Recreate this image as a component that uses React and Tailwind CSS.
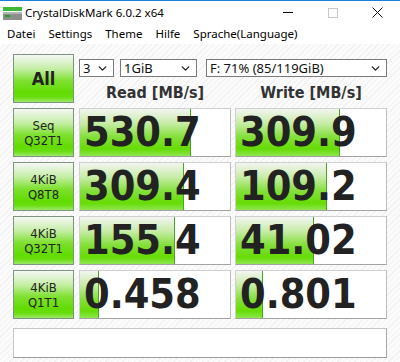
import { ChevronDown } from 'lucide-react'

const rows = [
  { l1: 'Seq', l2: 'Q32T1', read: '530.7', rw: 111, write: '309.9', ww: 104 },
  { l1: '4KiB', l2: 'Q8T8', read: '309.4', rw: 104, write: '109.2', ww: 91 },
  { l1: '4KiB', l2: 'Q32T1', read: '155.4', rw: 95, write: '41.02', ww: 78 },
  { l1: '4KiB', l2: 'Q1T1', read: '0.458', rw: 19, write: '0.801', ww: 27 }
]

const greenBtn =
  'bg-[linear-gradient(to_bottom,#f6f7f6_0%,#c4eea4_30%,#7ee030_55%,#62dc00_80%,#6ade10_90%,#9ce868_100%)] border border-[#7d957d]'

function Cell({ value, width }) {
  return (
    <div className="relative h-[49px] w-[152px] bg-white border border-[#cfcfcf] border-b-[#a3a3a3] border-r-[#bdbdbd] overflow-hidden">
      <div
        className="absolute left-0 top-0 bottom-0 border-r border-[#49a526] bg-[linear-gradient(to_bottom,#f3f5f2_0%,#c8eca8_30%,#84df3a_60%,#66dc04_85%,#8ee650_100%)]"
        style={{ width }}
      />
      <div className="relative h-full flex items-center pl-[4px] text-[41px] font-bold leading-none text-[#222] font-['DejaVu_Sans_Condensed','DejaVu_Sans',sans-serif]">
        {value}
      </div>
    </div>
  )
}

function Select({ w, children }) {
  return (
    <div
      className={`${w} h-[18px] bg-white border border-[#7a7a7a] flex items-center justify-between pl-[3px] pr-[4px] text-[13px] text-[#111] font-['Noto_Sans',sans-serif]`}
    >
      <span className="leading-none">{children}</span>
      <ChevronDown size={13} strokeWidth={2.5} className="text-[#222]" />
    </div>
  )
}

export default function App() {
  return (
    <div className="w-[400px] h-[362px] overflow-hidden flex flex-col bg-white font-['Noto_Sans',sans-serif]">
      <div className="h-px bg-[#1a7fd6]" />
      <div className="h-[23px] flex items-center relative">
        <svg width="20" height="14" viewBox="0 0 20 14" className="ml-[3px] mt-[2px]">
          <rect x="0" y="0" width="19" height="4" fill="#3cb838" />
          <rect x="0" y="5" width="19" height="8" fill="#8a8f8a" />
          <rect x="0" y="5" width="19" height="2" fill="#b3b7b3" />
          <rect x="2" y="8" width="5" height="2" fill="#2a9a2a" />
        </svg>
        <span className="ml-[2px] text-[11.5px] text-black">CrystalDiskMark 6.0.2 x64</span>
        <div className="absolute right-0 top-0 h-full flex items-center">
          <div className="w-[45px] flex justify-center">
            <div className="w-[10px] h-px bg-black" />
          </div>
          <div className="w-[45px] flex justify-center">
            <div className="w-[10px] h-[10px] border border-[#c8c8c8]" />
          </div>
          <div className="w-[45px] flex justify-center">
            <svg width="11" height="11" viewBox="0 0 11 11">
              <path d="M0.5 0.5L10.5 10.5M10.5 0.5L0.5 10.5" stroke="#111" strokeWidth="1" />
            </svg>
          </div>
        </div>
      </div>
      <div className="h-[20px] flex items-center gap-[13px] pl-[7px] text-[11.5px] text-black">
        <span>Datei</span>
        <span>Settings</span>
        <span>Theme</span>
        <span>Hilfe</span>
        <span>Sprache(Language)</span>
      </div>
      <div className="flex-1 bg-[repeating-linear-gradient(135deg,#fbfbfb_0px,#fbfbfb_3px,#f1f1f1_3px,#f1f1f1_4px)] pl-[13px] pt-[10px]">
        <div className="flex gap-[5px]">
          <div className={`w-[61px] h-[49px] ${greenBtn} flex items-center justify-center text-[18px] font-bold text-[#222] font-['DejaVu_Sans_Condensed','DejaVu_Sans',sans-serif]`}>
            All
          </div>
          <div className="flex flex-col">
            <div className="flex mt-[5px] gap-[6px]">
              <Select w="w-[35px]">3</Select>
              <Select w="w-[77px]">1GiB</Select>
              <div className="ml-[3px]">
                <Select w="w-[181px]">F: 71% (85/119GiB)</Select>
              </div>
            </div>
            <div className="flex gap-[4px] mt-[8px] text-[16px] font-bold text-[#333] font-['DejaVu_Sans_Condensed','DejaVu_Sans',sans-serif] leading-none">
              <div className="w-[152px] text-center">Read [MB/s]</div>
              <div className="w-[152px] text-center">Write [MB/s]</div>
            </div>
          </div>
        </div>
        <div className="flex flex-col gap-[5px] mt-[5px]">
          {rows.map((r, i) => (
            <div key={i} className="flex">
              <div className={`w-[61px] h-[49px] ${greenBtn} flex flex-col items-center justify-center text-[13px] leading-[15px] text-[#222] font-['DejaVu_Sans_Condensed','DejaVu_Sans',sans-serif]`}>
                <span>{r.l1}</span>
                <span>{r.l2}</span>
              </div>
              <div className="ml-[5px]">
                <Cell value={r.read} width={r.rw} />
              </div>
              <div className="ml-[4px]">
                <Cell value={r.write} width={r.ww} />
              </div>
            </div>
          ))}
        </div>
        <div className="mt-[9px] w-[374px] h-[30px] bg-white border border-[#c6c6c6] border-b-[#9a9a9a] border-r-[#a8a8a8]" />
      </div>
    </div>
  )
}
